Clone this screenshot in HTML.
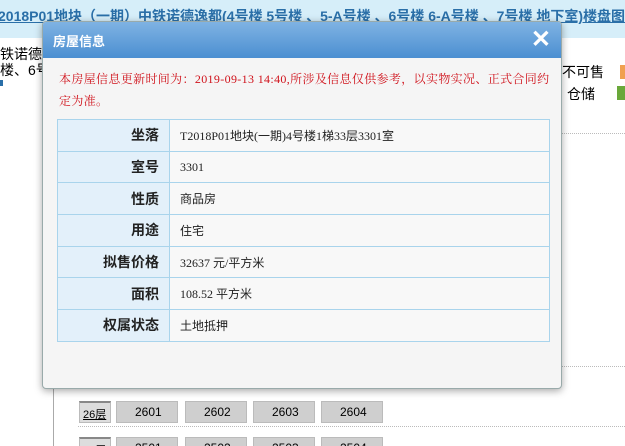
<!DOCTYPE html>
<html><head><meta charset="utf-8"><style>
*{margin:0;padding:0;box-sizing:border-box}
html,body{width:625px;height:446px;overflow:hidden}
body{background:#fff;font-family:"Liberation Sans","Noto Sans CJK SC",sans-serif;position:relative;font-size:13px}
.topbar{position:absolute;left:0;top:0;width:625px;height:38px;background:#d6eef9}
.title{position:absolute;left:-2px;top:6px;font-weight:bold;color:#2a6fa8;font-size:14px;white-space:nowrap;text-decoration:underline}
.abs{position:absolute;white-space:nowrap}
.dot{position:absolute;border-top:1px dotted #bbb;height:0}
.dlg{position:absolute;left:42px;top:21px;width:520px;height:368px;background:#f5f5f5;border:1px solid #9aa;border-radius:4px;box-shadow:0 2px 8px rgba(0,0,0,.35);overflow:hidden}
.hd{height:36px;background:linear-gradient(#7fb3e3,#4b8fd1);color:#fff;font-weight:bold;font-size:13px;padding:9px 0 0 10px;position:relative}
.x{position:absolute;right:10px;top:3px;font-size:24px;font-weight:bold;color:#fff}
.note{position:absolute;left:16px;top:46px;width:500px;white-space:nowrap;color:#d0121b;font-size:12px;letter-spacing:0.35px;line-height:22px;font-family:"Liberation Serif","Noto Serif CJK SC",serif}
table{position:absolute;left:14px;top:97px;width:493px;border-collapse:collapse}
td{border:1px solid #a9d4ec;height:31.7px;font-size:12px}
td.l{width:112px;background:#e3f0fa;text-align:right;padding-right:10px;font-weight:bold;font-size:14px;color:#222}
td.v{background:#f8f8f8;padding-left:10px;color:#222;font-family:"Liberation Serif","Noto Sans CJK SC",serif}
.u{position:absolute;top:401px;height:22px;width:62px;background:#cfcfcf;border:1px solid #bbb;font-size:12px;padding:3px 0 0 18px;text-align:left}
</style></head><body>
<div class="topbar"><div class="title">2018P01地块（一期）中铁诺德逸都(4号楼 5号楼 、5-A号楼 、6号楼 6-A号楼 、7号楼 地下室)楼盘图</div></div>
<div class="abs" style="left:0;top:44px;font-size:14px">铁诺德</div>
<div class="abs" style="left:0;top:60px;font-size:14px">楼、6号</div>
<div class="abs" style="left:0;top:80px;width:3px;height:6px;background:#2a6fa8"></div>
<div class="abs" style="left:562px;top:62px;font-size:14px">不可售</div>
<div class="abs" style="left:620px;top:65px;width:8px;height:14px;background:#f0a050"></div>
<div class="abs" style="left:567px;top:84px;font-size:14px">仓储</div>
<div class="abs" style="left:617px;top:86px;width:10px;height:14px;background:#6aa83a"></div>
<div class="dot" style="left:562px;top:133px;width:63px"></div>
<div class="dot" style="left:562px;top:366px;width:63px"></div>
<div class="dot" style="left:78px;top:426px;width:547px"></div>
<div class="abs" style="left:53px;top:360px;width:1px;height:86px;background:#aaa"></div>
<div class="abs" style="left:79px;top:401px;width:32px;height:22px;background:#ddd;border:1px solid #bbb;border-top:2px solid #888;font-size:11px;text-decoration:underline;padding:3px 0 0 3px">26层</div>
<div class="u" style="left:116px">2601</div><div class="u" style="left:185px">2602</div><div class="u" style="left:253px">2603</div><div class="u" style="left:321px">2604</div>
<div class="abs" style="left:79px;top:437px;width:32px;height:22px;background:#ddd;border:1px solid #bbb;border-top:2px solid #888;font-size:11px;padding:3px 0 0 3px">25层</div>
<div class="u" style="left:116px;top:437px">2501</div><div class="u" style="left:185px;top:437px">2502</div><div class="u" style="left:253px;top:437px">2503</div><div class="u" style="left:321px;top:437px">2504</div>
<div class="dlg">
<div class="hd">房屋信息<span class="x">✕</span></div>
<div class="note">本房屋信息更新时间为：2019-09-13 14:40,所涉及信息仅供参考，以实物实况、正式合同约<br>定为准。</div>
<table>
<tr><td class="l">坐落</td><td class="v">T2018P01地块(一期)4号楼1梯33层3301室</td></tr>
<tr><td class="l">室号</td><td class="v">3301</td></tr>
<tr><td class="l">性质</td><td class="v">商品房</td></tr>
<tr><td class="l">用途</td><td class="v">住宅</td></tr>
<tr><td class="l">拟售价格</td><td class="v">32637 元/平方米</td></tr>
<tr><td class="l">面积</td><td class="v">108.52 平方米</td></tr>
<tr><td class="l">权属状态</td><td class="v">土地抵押</td></tr>
</table>
</div>
</body></html>
